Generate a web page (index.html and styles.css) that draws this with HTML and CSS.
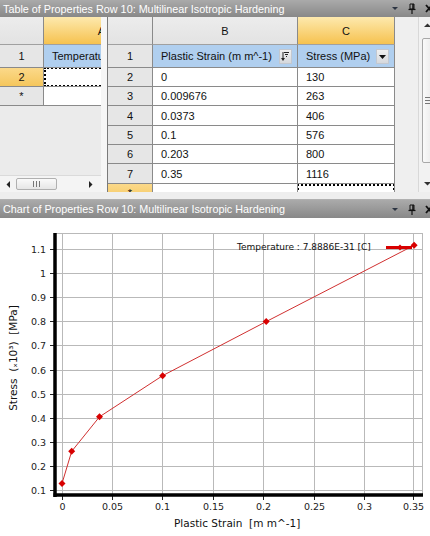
FILE: index.html
```html
<!DOCTYPE html>
<html>
<head>
<meta charset="utf-8">
<link rel="stylesheet" href="styles.css">
</head>
<body>
<div class="app">
  <div class="titlebar t1">
    <span class="title">Table of Properties Row 10: Multilinear Isotropic Hardening</span>
    <svg class="tb-icons" width="44" height="17" viewBox="0 0 44 17">
      <path d="M2 7 L8 7 L5 10 Z" fill="#2c3442"/>
      <path d="M20 4 H24 V9 H20 Z" fill="none" stroke="#111" stroke-width="1"/>
      <path d="M23 4 V9" stroke="#111" stroke-width="1.5"/>
      <path d="M18.5 9.5 H25.5" stroke="#111" stroke-width="1.2"/>
      <path d="M22 10 V14" stroke="#111" stroke-width="1.2"/>
      <path d="M36 5 L42 12 M42 5 L36 12" stroke="#111" stroke-width="1.8"/>
    </svg>
  </div>
  <div class="table-panel">
    <div class="left-pane">
      <div class="grid left-grid">
        <div class="c ch"></div>
        <div class="c ch selh noright endtext"><span class="cut">A</span></div>
        <div class="c rh">1</div>
        <div class="c blue noright">Temperature</div>
        <div class="c rh selrow">2</div>
        <div class="c noright dotted-l"></div>
        <div class="c rh">*</div>
        <div class="c noright"></div>
      </div>
      <div class="filler"></div>
      <div class="hscroll">
        <svg class="arr" width="6" height="7" viewBox="0 0 6 7"><path d="M4 0 L4 7 L0.5 3.5 Z" fill="#222"/></svg>
        <div class="hthumb"><span class="grip"></span><span class="grip"></span><span class="grip"></span></div>
        <div class="hspace"></div>
        <svg class="arr" width="6" height="7" viewBox="0 0 6 7"><path d="M2 0 L2 7 L5.5 3.5 Z" fill="#222"/></svg>
      </div>
    </div>
    <div class="splitter"></div>
    <div class="right-pane">
      <div class="grid right-grid">
        <div class="c ch"></div>
        <div class="c ch">B</div>
        <div class="c ch selh">C</div>

        <div class="c rh">1</div>
        <div class="c blue">Plastic Strain (m m^-1)
          <span class="btn">
            <svg width="9" height="11" viewBox="0 0 9 11">
              <path d="M3 1.5 H8 M4 3.5 H7 M5 5.5 H6" stroke="#222" stroke-width="1"/>
              <path d="M2 1 V8" stroke="#222" stroke-width="1"/>
              <path d="M0 7 H4 L2 10 Z" fill="#222"/>
            </svg>
          </span>
        </div>
        <div class="c blue">Stress (MPa)
          <span class="btn">
            <svg width="9" height="11" viewBox="0 0 9 11"><path d="M1 4 H8 L4.5 8 Z" fill="#111"/></svg>
          </span>
        </div>

        <div class="c rh">2</div><div class="c">0</div><div class="c">130</div>
        <div class="c rh">3</div><div class="c">0.009676</div><div class="c">263</div>
        <div class="c rh">4</div><div class="c">0.0373</div><div class="c">406</div>
        <div class="c rh">5</div><div class="c">0.1</div><div class="c">576</div>
        <div class="c rh">6</div><div class="c">0.203</div><div class="c">800</div>
        <div class="c rh">7</div><div class="c">0.35</div><div class="c">1116</div>
        <div class="c rh selrow">*</div><div class="c"></div><div class="c dotted-c"></div>
      </div>
    </div>
    <div class="gap"></div>
    <div class="vscroll">
      <div class="varr"><svg width="7" height="5" viewBox="0 0 7 5"><path d="M0 4 L7 4 L3.5 0.5 Z" fill="#333"/></svg></div>
      <div class="vthumb"><span class="hgrip"></span><span class="hgrip"></span><span class="hgrip"></span></div>
      <div class="vspace"></div>
      <div class="varr"><svg width="7" height="5" viewBox="0 0 7 5"><path d="M0 1 L7 1 L3.5 4.5 Z" fill="#333"/></svg></div>
    </div>
  </div>
  <div class="sep"></div>
  <div class="titlebar t2">
    <span class="title">Chart of Properties Row 10: Multilinear Isotropic Hardening</span>
    <svg class="tb-icons" width="44" height="17" viewBox="0 0 44 17">
      <path d="M2 7 L8 7 L5 10 Z" fill="#2c3442"/>
      <path d="M20 4 H24 V9 H20 Z" fill="none" stroke="#111" stroke-width="1"/>
      <path d="M23 4 V9" stroke="#111" stroke-width="1.5"/>
      <path d="M18.5 9.5 H25.5" stroke="#111" stroke-width="1.2"/>
      <path d="M22 10 V14" stroke="#111" stroke-width="1.2"/>
      <path d="M36 5 L42 12 M42 5 L36 12" stroke="#111" stroke-width="1.8"/>
    </svg>
  </div>
  <div class="chart">
    <svg width="430" height="318" viewBox="0 0 430 318" class="plot">
      <g stroke="#b9b9b9" stroke-width="1" fill="none">
        <path d="M55 15.5 H423"/>
        <path d="M55 31.5 H423"/>
        <path d="M55 55.5 H423"/>
        <path d="M55 79.5 H423"/>
        <path d="M55 103.5 H423"/>
        <path d="M55 127.5 H423"/>
        <path d="M55 152.5 H423"/>
        <path d="M55 176.5 H423"/>
        <path d="M55 200.5 H423"/>
        <path d="M55 224.5 H423"/>
        <path d="M55 248.5 H423"/>
        <path d="M55 272.5 H423"/>
        <path d="M62.5 15 V277"/>
        <path d="M112.5 15 V277"/>
        <path d="M162.5 15 V277"/>
        <path d="M213.5 15 V277"/>
        <path d="M263.5 15 V277"/>
        <path d="M314.5 15 V277"/>
        <path d="M364.5 15 V277"/>
        <path d="M413.5 15 V277"/>
        <path d="M422.5 15 V277"/>
      </g>
      <g stroke="#222" stroke-width="1">
        <path d="M50 31.5 H54 M50 55.5 H54 M50 79.5 H54 M50 103.5 H54 M50 127.5 H54 M50 152.5 H54 M50 176.5 H54 M50 200.5 H54 M50 224.5 H54 M50 248.5 H54 M50 272.5 H54"/>
        <path d="M62.5 278 V282 M112.5 278 V282 M162.5 278 V282 M213.5 278 V282 M263.5 278 V282 M314.5 278 V282 M364.5 278 V282 M413.5 278 V282"/>
      </g>
      <path d="M55 15 V279" stroke="#000" stroke-width="3.5"/>
      <path d="M53.5 277 H423" stroke="#000" stroke-width="3.5"/>
      <polyline points="62,265.5 71.7,233.3 99.5,198.8 162.6,157.7 266.2,103.6 414.1,27.3" fill="none" stroke="#d03030" stroke-width="1"/>
      <g fill="#d80000">
        <path d="M62 262 L65.5 265.5 L62 269 L58.5 265.5 Z"/>
        <path d="M71.7 229.8 L75.2 233.3 L71.7 236.8 L68.2 233.3 Z"/>
        <path d="M99.5 195.3 L103 198.8 L99.5 202.3 L96 198.8 Z"/>
        <path d="M162.6 154.2 L166.1 157.7 L162.6 161.2 L159.1 157.7 Z"/>
        <path d="M266.2 100.1 L269.7 103.6 L266.2 107.1 L262.7 103.6 Z"/>
        <path d="M414.1 23.8 L417.6 27.3 L414.1 30.8 L410.6 27.3 Z"/>
      </g>
      <path d="M386 29.5 H412" stroke="#d80000" stroke-width="3"/>
      <g fill="#d80000">
        <path d="M400 26.5 L403 29.5 L400 32.5 L397 29.5 Z"/>
      </g>
      <text x="237" y="32" class="legend">Temperature : 7.8886E-31 [C]</text>
      <g class="ytick" text-anchor="end">
        <text x="46" y="35">1.1</text>
        <text x="46" y="59">1</text>
        <text x="46" y="83">0.9</text>
        <text x="46" y="107">0.8</text>
        <text x="46" y="131">0.7</text>
        <text x="46" y="156">0.6</text>
        <text x="46" y="180">0.5</text>
        <text x="46" y="204">0.4</text>
        <text x="46" y="228">0.3</text>
        <text x="46" y="252">0.2</text>
        <text x="46" y="276">0.1</text>
      </g>
      <g class="xtick" text-anchor="middle">
        <text x="62.5" y="292">0</text>
        <text x="112.5" y="292">0.05</text>
        <text x="162.5" y="292">0.1</text>
        <text x="213.5" y="292">0.15</text>
        <text x="263.5" y="292">0.2</text>
        <text x="314.5" y="292">0.25</text>
        <text x="364.5" y="292">0.3</text>
        <text x="413.5" y="292">0.35</text>
      </g>
      <text x="174" y="309" class="axlabel" xml:space="preserve">Plastic Strain  [m m^-1]</text>
      <text class="axlabel" text-anchor="middle" transform="translate(17,140) rotate(-90)" xml:space="preserve">Stress  (ₓ10³)  [MPa]</text>
    </svg>
  </div>
</div>
</body>
</html>
```
FILE: styles.css
```css
html, body {
  margin: 0;
  padding: 0;
  background: #fff;
}

.app {
  width: 430px;
  height: 536px;
  overflow: hidden;
  font-family: "Liberation Sans", Arial, sans-serif;
  font-size: 11px;
  color: #111;
  display: flex;
  flex-direction: column;
}

.titlebar {
  display: flex;
  align-items: center;
  background: linear-gradient(#aaaaaa, #888888);
  color: #fff;
  padding-left: 3px;
  flex: none;
  overflow: hidden;
}

.t1 { height: 17px; }
.t2 { height: 18px; }

.titlebar .title {
  flex: 1;
  white-space: nowrap;
  font-size: 10.8px;
}

.tb-icons {
  flex: none;
  margin-right: -4px;
}

.table-panel {
  display: flex;
  height: 175px;
  flex: none;
  background: #eeeeee;
  overflow: hidden;
}

.left-pane {
  width: 101px;
  flex: none;
  display: flex;
  flex-direction: column;
  overflow: hidden;
}

.grid {
  display: grid;
  background: #fff;
}

.left-grid {
  grid-template-columns: 44px 57px;
  grid-template-rows: 28px 23px 19px 19px;
}

.right-grid {
  grid-template-columns: 45px 145px 97px;
  grid-template-rows: 28px 23px 19px 19px 20px 19px 19px 20px 19px;
}

.c {
  box-sizing: border-box;
  border-right: 1px solid #8a8a8a;
  border-bottom: 1px solid #8a8a8a;
  display: flex;
  align-items: center;
  overflow: hidden;
  white-space: nowrap;
  background: #fff;
  padding: 0 0 0 8px;
  position: relative;
}

.noright { border-right: none; }

.ch {
  background: linear-gradient(#ececec, #e3e3e3);
  justify-content: center;
  padding: 0;
  border-bottom-color: #a0a0a0;
}

.rh {
  background: #e6e6e6;
  justify-content: center;
  padding: 0;
}

.selh {
  background: linear-gradient(#fde9ae, #f6c24f);
}

.selrow {
  background: linear-gradient(#fbd98a, #f5c65c);
}

.endtext {
  justify-content: flex-end;
}

.cut {
  margin-right: -4px;
}

.blue {
  background: #b0cfef;
  padding-right: 5px;
}

.btn {
  margin-left: auto;
  width: 13px;
  height: 15px;
  box-sizing: border-box;
  border: 1px solid #c3c8d0;
  background: linear-gradient(#f0f0f0, #d6d8dc);
  display: flex;
  align-items: center;
  justify-content: center;
  flex: none;
}

.dotted-l::after {
  content: "";
  position: absolute;
  left: 0;
  top: -1px;
  right: -4px;
  bottom: -1px;
  border: 2px dotted #000;
}

.dotted-c::after {
  content: "";
  position: absolute;
  left: -1px;
  top: 0;
  right: -1px;
  bottom: -4px;
  border: 2px dotted #000;
}

.filler {
  flex: 1;
  background: #ebebeb;
}

.hscroll {
  height: 17px;
  flex: none;
  display: flex;
  align-items: center;
  background: #f4f4f4;
  border-top: 1px solid #dadada;
  box-sizing: border-box;
  padding: 0 8px 0 6px;
  gap: 4px;
}

.hthumb {
  width: 41px;
  height: 12px;
  box-sizing: border-box;
  border: 1px solid #b0b0b0;
  border-radius: 2px;
  background: linear-gradient(#fafafa, #e6e6e6);
  display: flex;
  align-items: center;
  justify-content: center;
  gap: 2px;
}

.grip {
  width: 1px;
  height: 6px;
  background: #777;
}

.hspace { flex: 1; }

.splitter {
  width: 7px;
  flex: none;
  box-sizing: border-box;
  background: #f6f6f6;
  border-right: 1px solid #7a7a7a;
}

.right-pane {
  width: 287px;
  flex: none;
  overflow: hidden;
}

.gap {
  width: 23px;
  flex: none;
  background: #efefef;
}

.vscroll {
  width: 17px;
  flex: none;
  display: flex;
  flex-direction: column;
  align-items: stretch;
  background: #f2f2f2;
  border-left: 1px solid #d8d8d8;
  box-sizing: border-box;
}

.varr {
  height: 17px;
  display: flex;
  align-items: center;
  justify-content: center;
  flex: none;
}

.vthumb {
  margin: 4px 0 0 3px;
  height: 125px;
  box-sizing: border-box;
  border: 1px solid #a8a8a8;
  border-radius: 2px;
  background: linear-gradient(90deg, #fafafa, #e8e8e8);
  display: flex;
  flex-direction: column;
  align-items: flex-start;
  justify-content: center;
  gap: 2px;
  padding-left: 2px;
}

.hgrip {
  width: 6px;
  height: 1px;
  background: #777;
}

.vspace { flex: 1; }

.sep {
  height: 8px;
  flex: none;
  background: #eeeeee;
  box-sizing: border-box;
  border-bottom: 1px solid #b0b0b0;
}

.chart {
  flex: 1;
  background: #fff;
}

.plot {
  display: block;
  font-family: "DejaVu Sans", sans-serif;
}

.legend {
  font-size: 9px;
  fill: #111;
}

.ytick, .xtick {
  font-size: 9.5px;
  fill: #222;
}

.axlabel {
  font-size: 10.5px;
  fill: #111;
}
```
